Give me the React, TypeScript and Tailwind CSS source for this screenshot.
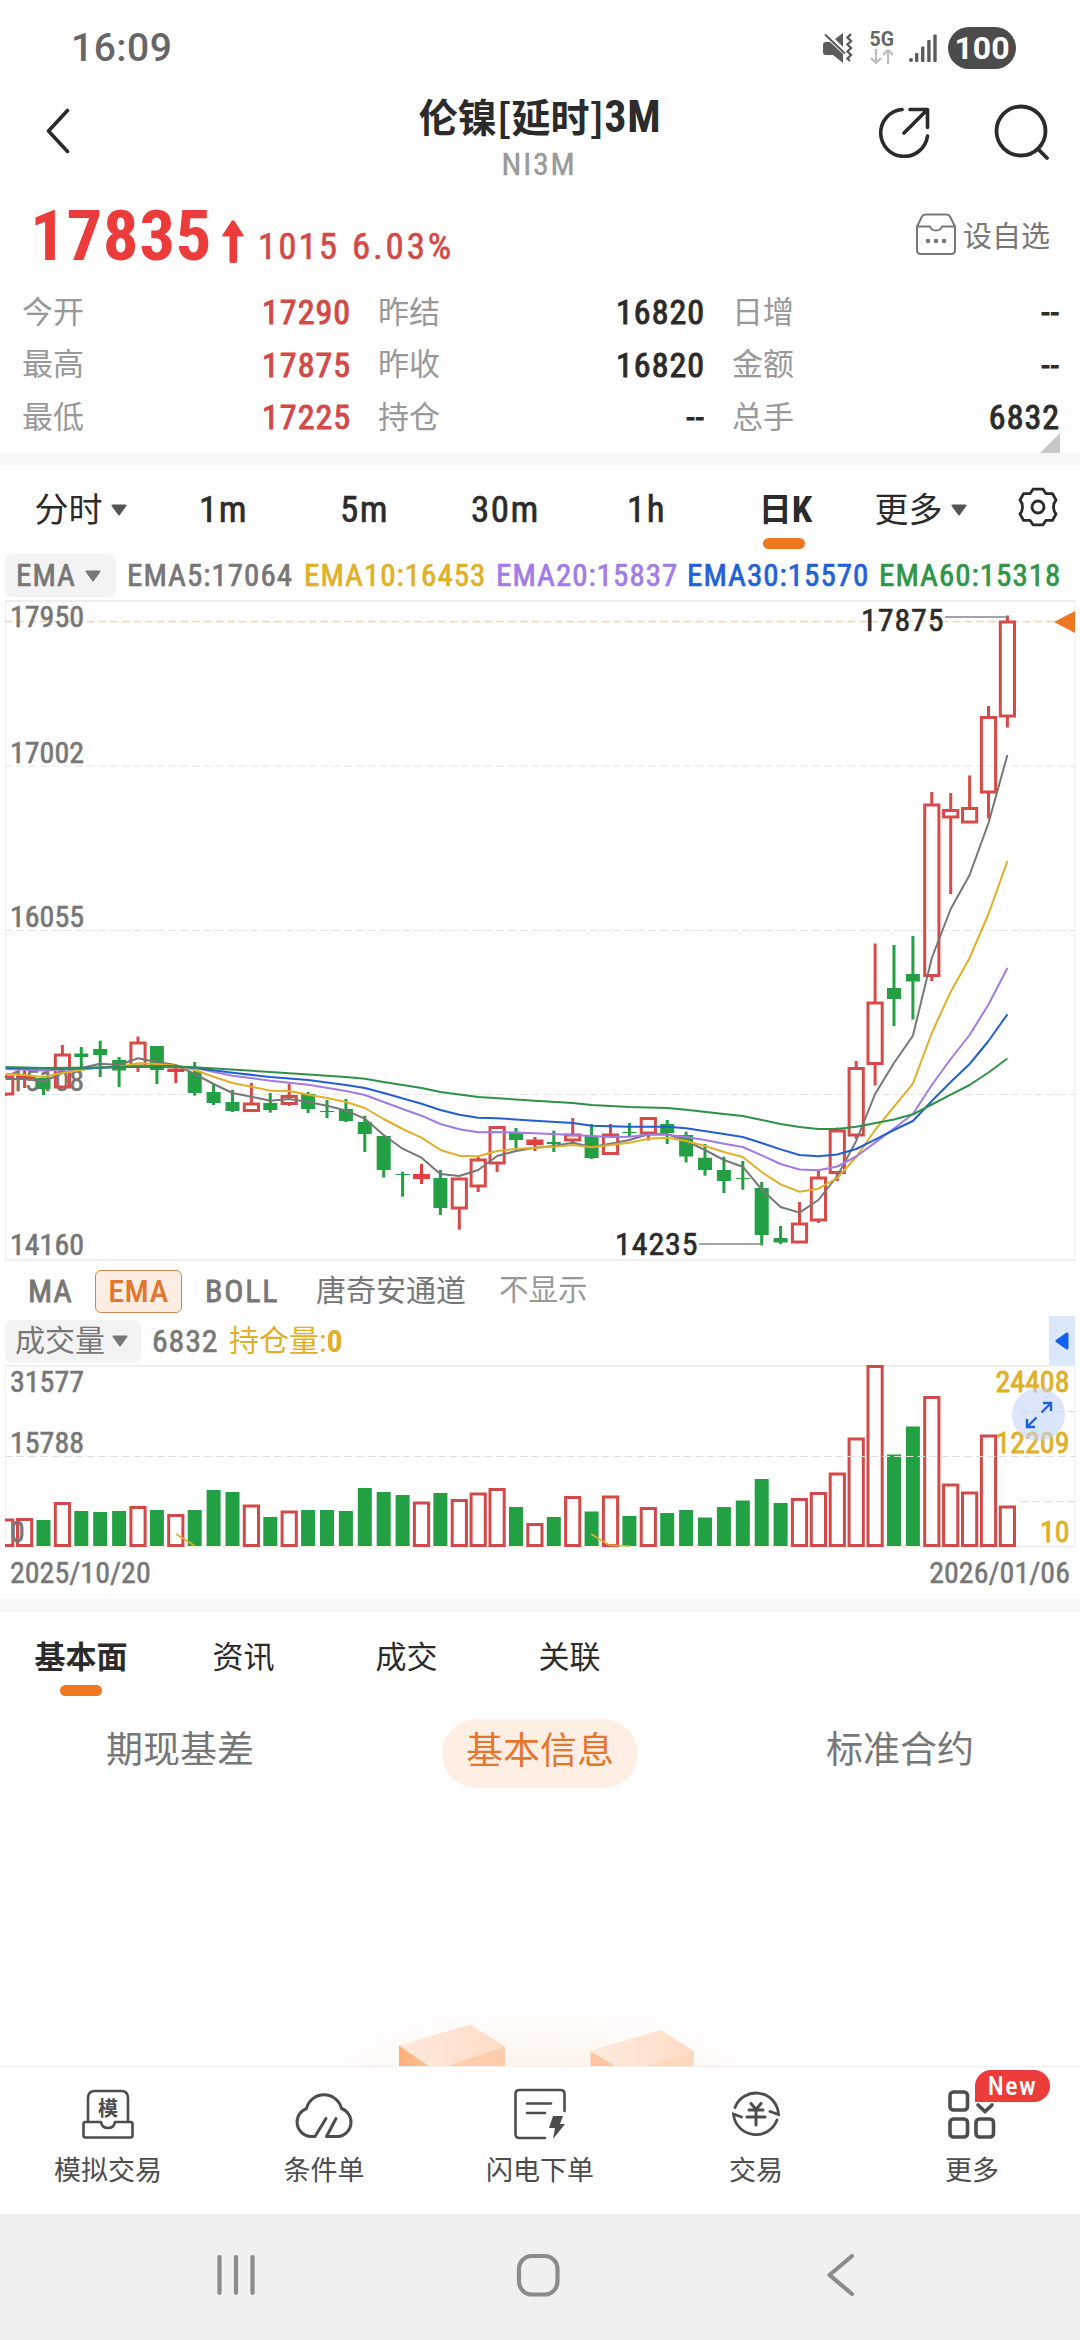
import React from "react";

type Candle = [kind: "u" | "d" | "U" | "x", high: number, top: number, bottom: number, low: number];
type Point = [index: number, y: number];

const STEP = 18.9;
const FIRST_X = 5.7;

// u: hollow up, U: thin filled up, d: down, x: flat doji
const candles: Candle[] = [
  ["u", 1075, 1077, 1094, 1096],
  ["U", 1069, 1076, 1079, 1088],
  ["d", 1076, 1078, 1089, 1095],
  ["u", 1045, 1055, 1087, 1088],
  ["d", 1047, 1053.5, 1057, 1068],
  ["d", 1040.7, 1049, 1055, 1077],
  ["d", 1057, 1060, 1070.5, 1087],
  ["u", 1036.5, 1043, 1066, 1072],
  ["d", 1046, 1046, 1070, 1084],
  ["U", 1068, 1068.5, 1072, 1083],
  ["d", 1062, 1072, 1093, 1095.7],
  ["d", 1084, 1092, 1103, 1105],
  ["d", 1090, 1102, 1111, 1112],
  ["u", 1083, 1104, 1110.5, 1112],
  ["d", 1093, 1103, 1110, 1112.7],
  ["u", 1084, 1096.5, 1103.5, 1106],
  ["d", 1092, 1094, 1109, 1113],
  ["x", 1100, 1111, 1112, 1118],
  ["d", 1099, 1109, 1121, 1122],
  ["d", 1115.7, 1122, 1134, 1152],
  ["d", 1136, 1136, 1170, 1177.5],
  ["x", 1171.7, 1174, 1175, 1196.7],
  ["U", 1164, 1174, 1179, 1184],
  ["d", 1170, 1178, 1208, 1215],
  ["u", 1177.7, 1179, 1208, 1229.7],
  ["u", 1157, 1160, 1186, 1192],
  ["u", 1126, 1127.5, 1163, 1172],
  ["d", 1128, 1132, 1140, 1148],
  ["U", 1137, 1139.5, 1145, 1151],
  ["d", 1130.7, 1142, 1144, 1152],
  ["u", 1118, 1135, 1140, 1144],
  ["d", 1124, 1135.7, 1158, 1159],
  ["u", 1124, 1135, 1153.5, 1155],
  ["x", 1123, 1132, 1133, 1137],
  ["u", 1117, 1118.5, 1133, 1140.5],
  ["d", 1120, 1124, 1133, 1144],
  ["d", 1131.7, 1135, 1156.5, 1162.5],
  ["d", 1144, 1157.7, 1170, 1175.7],
  ["d", 1156.7, 1170, 1181, 1193],
  ["x", 1161, 1178, 1179, 1189.7],
  ["d", 1182, 1188, 1235, 1245.5],
  ["d", 1226, 1238, 1242.5, 1244],
  ["u", 1202, 1224, 1242, 1243],
  ["u", 1171, 1178, 1220, 1223],
  ["u", 1127.5, 1131, 1172.5, 1181],
  ["u", 1061, 1068.5, 1135, 1139],
  ["u", 943.5, 1003, 1063.5, 1085.5],
  ["d", 945, 988, 999, 1026],
  ["d", 936, 974, 981.5, 1019.5],
  ["u", 792, 805, 975.5, 981],
  ["u", 793, 810.5, 817, 894],
  ["u", 775.5, 808.5, 822, 823],
  ["u", 706, 717.5, 792, 818.5],
  ["u", 615.5, 622, 716, 727.5],
];

const ema5: Point[] = [[0, 1079], [1, 1079], [2, 1081.5], [3, 1073], [4, 1068], [5, 1063.7], [6, 1065], [7, 1058.3], [8, 1062], [9, 1065], [10, 1074], [11, 1084], [12, 1093], [13, 1096.7], [14, 1100.7], [15, 1099], [16, 1102], [17, 1105.7], [18, 1110.5], [19, 1118.7], [20, 1135], [21, 1148.7], [22, 1157.7], [23, 1174], [24, 1176], [25, 1170], [26, 1156], [27, 1151], [28, 1147.7], [29, 1146], [30, 1142.7], [31, 1147], [32, 1143.7], [33, 1140], [34, 1134.3], [35, 1134], [36, 1141], [37, 1150], [38, 1160], [39, 1166.7], [40, 1189.5], [41, 1207], [42, 1212.6], [43, 1200], [44, 1176], [45, 1141], [46, 1094], [47, 1063], [48, 1035.7], [49, 958], [50, 909], [51, 875], [52, 823], [53, 755]];
const ema10: Point[] = [[0, 1073.7], [1, 1075], [2, 1077], [3, 1073], [4, 1070], [5, 1067.3], [6, 1067], [7, 1063.3], [8, 1064], [9, 1065.7], [10, 1070], [11, 1076.7], [12, 1083], [13, 1086.7], [14, 1090.7], [15, 1091], [16, 1094.7], [17, 1098], [18, 1102], [19, 1108], [20, 1119], [21, 1129], [22, 1137.7], [23, 1150], [24, 1155.7], [25, 1156.3], [26, 1151], [27, 1149], [28, 1147.7], [29, 1146.7], [30, 1145], [31, 1147.3], [32, 1145], [33, 1142.7], [34, 1138.7], [35, 1137.7], [36, 1141], [37, 1146], [38, 1152], [39, 1157], [40, 1172], [41, 1184.4], [42, 1191.7], [43, 1188.7], [44, 1178], [45, 1157], [46, 1130], [47, 1106.7], [48, 1083.6], [49, 1033], [50, 991.7], [51, 958], [52, 914], [53, 861]];
const ema20: Point[] = [[0, 1069], [2, 1070.5], [4, 1068.7], [6, 1067], [7, 1066], [9, 1066], [10, 1068], [12, 1075.7], [14, 1080.7], [16, 1084.7], [18, 1091], [19, 1095], [20, 1102], [21, 1109], [22, 1115.7], [23, 1124], [24, 1129.3], [25, 1132.3], [26, 1132], [28, 1133.3], [30, 1135], [32, 1137], [33, 1136.7], [34, 1134.7], [35, 1134.7], [36, 1137], [37, 1140], [38, 1143.7], [39, 1147], [40, 1155.3], [41, 1164], [42, 1169.5], [43, 1170.3], [44, 1166.5], [45, 1156.5], [46, 1142.6], [47, 1128.5], [48, 1114], [49, 1085], [50, 1059], [51, 1035], [52, 1004.5], [53, 968]];
const ema30: Point[] = [[0, 1068], [3, 1068.7], [6, 1067], [9, 1066.5], [10, 1067.7], [12, 1072.7], [14, 1077], [16, 1080], [18, 1085], [19, 1088], [20, 1093], [22, 1103.7], [23, 1110], [24, 1114.7], [25, 1117.7], [26, 1118.3], [28, 1120.7], [30, 1123], [31, 1125.7], [33, 1126.7], [35, 1126.7], [36, 1128.3], [38, 1134], [39, 1137], [40, 1143], [41, 1149.4], [42, 1155], [43, 1156.2], [44, 1154.5], [45, 1149], [46, 1139.6], [47, 1130], [48, 1121], [49, 1101], [50, 1082], [51, 1064], [52, 1041], [53, 1014.3]];
const ema60: Point[] = [[0, 1067], [2, 1068], [5, 1067.5], [8, 1066], [10, 1067.3], [14, 1072], [18, 1077], [19, 1078.7], [20, 1082], [22, 1088], [23, 1092], [25, 1097], [28, 1100.7], [30, 1103], [31, 1105], [33, 1107], [35, 1108], [36, 1109.7], [38, 1114], [39, 1116], [40, 1120], [41, 1124], [42, 1127], [43, 1129], [44, 1129], [45, 1126.8], [47, 1119.5], [48, 1114.3], [49, 1104.5], [50, 1094.7], [51, 1085], [52, 1072.5], [53, 1058.5]];

const volumes: [up: 0 | 1, top: number][] = [
  [1, 1520], [1, 1519.5], [0, 1520], [1, 1503.5], [0, 1511], [0, 1512], [0, 1511], [1, 1507.5], [0, 1510],
  [1, 1515.5], [0, 1510], [0, 1490], [0, 1492], [1, 1506], [0, 1517], [1, 1512], [0, 1510], [0, 1510],
  [0, 1511], [0, 1488], [0, 1492], [0, 1495], [1, 1503], [0, 1493], [1, 1500.5], [1, 1494], [1, 1489.5],
  [0, 1507], [1, 1524.5], [0, 1517], [1, 1497.5], [0, 1511.5], [1, 1497], [0, 1516], [1, 1508.5], [0, 1513],
  [0, 1510], [0, 1517.5], [0, 1507], [0, 1500.5], [0, 1479], [0, 1503], [1, 1499.5], [1, 1493.5], [1, 1474],
  [1, 1439], [1, 1366.5], [0, 1454.5], [0, 1426.5], [1, 1397.5], [1, 1485], [1, 1493], [1, 1436], [1, 1507],
];

const stats = [
  ["今开", "17290", true],
  ["昨结", "16820", false],
  ["日增", "--", false],
  ["最高", "17875", true],
  ["昨收", "16820", false],
  ["金额", "--", false],
  ["最低", "17225", true],
  ["持仓", "--", false],
  ["总手", "6832", false],
] as const;

const x = (i: number) => FIRST_X + i * STEP;
const toPoints = (data: Point[]) => data.map(([i, y]) => `${x(i)},${y}`).join(" ");

const Caret = ({ className = "" }: { className?: string }) => (
  <svg viewBox="0 0 16 12" className={`w-4 h-3 ${className}`}>
    <path d="M1.500 1.500h13L8 10.500z" fill="currentColor" stroke="currentColor" strokeWidth="2" strokeLinejoin="round" />
  </svg>
);

const StatusBar = () => (
  <div className="h-[84px] pt-3 pl-[71px] pr-16 flex items-center justify-between text-[#666] font-['Roboto']">
    <span className="text-[39px] font-medium tracking-[0.5px]">16:09</span>
    <div className="flex items-center">
      <svg viewBox="0 0 30 30" className="w-[30px] h-[30px] mr-[17px]" fill="#5c5c5c">
        <path d="M0 12q0-3 3-3h4l13 12v9l-10-8H3q-3 0-3-3zM12 6l8-6v14z" />
        <path d="M2 1.500l20 19" stroke="#5c5c5c" strokeWidth="2" />
        <path d="M28 1l-3.500 3.500 3.500 3.500-3.500 3.500 3.500 3.500-3.500 3.500 3.500 3.500-3.500 3.500 2.500 2.500" fill="none" stroke="#5c5c5c" strokeWidth="2.400" />
      </svg>
      <div className="flex flex-col items-center mr-[15px]">
        <span className="text-[19.5px] leading-[18px] font-bold">5G</span>
        <svg viewBox="0 0 24 16" className="w-6 h-4" fill="none" stroke="#bdbdbd" strokeWidth="2.200">
          <path d="M6 0v14M1 9l5 5 5-5M18 15V1M13 6l5-5 5 5" />
        </svg>
      </div>
      <svg viewBox="0 0 28 28" className="w-7 h-7 mr-[11px]" fill="#5c5c5c">
        <circle cx="2" cy="26" r="2" />
        <rect x="6" y="19" width="3.400" height="9" rx="1" />
        <rect x="12" y="12.500" width="3.400" height="15.500" rx="1" />
        <rect x="18.200" y="6" width="3.400" height="22" rx="1" />
        <rect x="24.300" y="0.500" width="3.400" height="27.500" rx="1" />
      </svg>
      <span className="w-[68px] h-[42px] rounded-full bg-[#4b4b4b] text-white text-[32px] leading-[43px] font-bold text-center">
        100
      </span>
    </div>
  </div>
);

const Header = () => (
  <header className="relative h-[101px] flex items-center justify-between pl-[46px] pr-[30px] text-[#2b2b2b]">
    <svg viewBox="0 0 24 46" className="w-6 h-[46px] -mt-2" fill="none" stroke="currentColor" strokeWidth="3.600" strokeLinecap="round" strokeLinejoin="round">
      <path d="M21.500 2.500L2.500 23l19 20.500" />
    </svg>
    <div className="absolute left-0 right-0 top-1.5 flex flex-col items-center">
      <h1 className="flex items-center h-[50px] text-[39px] leading-none font-bold font-['Noto_Sans_CJK_SC',sans-serif]">
        伦镍[延时]
        <span className="text-[44px] tracking-[0.8px] font-['Roboto_Condensed'] mt-1">3M</span>
      </h1>
      <span className="text-[32px] leading-[48px] text-[#999] tracking-[1.8px] mr-0.5 [-webkit-text-stroke:0.4px]">NI3M</span>
    </div>
    <div className="flex items-center -mt-1.5 gap-16">
      <svg viewBox="0 0 52 52" className="w-[52px] h-[52px]" fill="none" stroke="currentColor" strokeWidth="3.600" strokeLinecap="round" strokeLinejoin="round">
        <path d="M24 3.500A23.500 23.500 0 1 0 49.500 30M32 3.500h17.500v18M49 4L26 27" />
      </svg>
      <svg viewBox="0 0 56 56" className="w-14 h-14" fill="none" stroke="currentColor" strokeWidth="3.800" strokeLinecap="round">
        <circle cx="27" cy="27" r="24.500" />
        <path d="M44 45l9 9" />
      </svg>
    </div>
  </header>
);

const PriceRow = () => (
  <div className="h-[101px] flex items-center pl-[30px] pr-[30px]">
    <span className="text-[71px] leading-none font-bold text-[#eb3b3b] tracking-[0.5px] w-[192px]">17835</span>
    <svg viewBox="0 0 22 43" className="w-[22px] h-[43px] mt-3" fill="#eb3b3b">
      <path d="M9.500 1q1.500-1.500 3 0l9 14q.5 1.500-1 1.500H15V41q0 2-2 2H9.500q-2 0-2-2V16.500h-6Q0 16.500.5 15z" />
    </svg>
    <span className="text-[37px] leading-none text-[#d14a48] tracking-[2px] ml-[14px] mt-[22px] w-[94px] [-webkit-text-stroke:0.6px]">1015</span>
    <span className="text-[37px] leading-none text-[#d14a48] tracking-[2.8px] mt-[22px] [-webkit-text-stroke:0.6px]">6.03%</span>
    <button className="ml-auto flex items-center gap-[7px] text-[29px] leading-none text-[#777]">
      <svg viewBox="0 0 40 42" className="w-10 h-[42px] -mt-1" fill="none" stroke="currentColor" strokeWidth="2" strokeLinejoin="round">
        <path d="M1 13.500L6 3.500Q7 1.500 9.500 1.500h21Q33 1.500 34 3.500l5 10V37q0 4-4 4H5q-4 0-4-4zM1 13.500h13q1.500 4 6 4t6-4h13" />
        <g fill="currentColor" stroke="none">
          <circle cx="12" cy="28" r="2.300" />
          <circle cx="20" cy="28" r="2.300" />
          <circle cx="28" cy="28" r="2.300" />
        </g>
      </svg>
      <span className="mt-1">设自选</span>
    </button>
  </div>
);

const Stats = () => (
  <div className="relative h-[167px] pl-[22px] grid grid-cols-[329px_327px_328px] gap-x-[27px] content-start">
    {stats.map(([label, value, up]) => (
      <div key={label} className="h-[52.5px] flex items-center justify-between leading-none">
        <span className="text-[31px] text-[#999]">{label}</span>
        <span className={`text-[34px] tracking-[1px] [-webkit-text-stroke:1px] ${up ? "text-[#d14a48]" : "text-[#2b2b2b]"}`}>{value}</span>
      </div>
    ))}
    <svg viewBox="0 0 20 20" className="absolute right-5 bottom-0 w-5 h-5">
      <path d="M20 0v20H0z" fill="#c8c8c8" />
    </svg>
  </div>
);

const Periods = () => (
  <nav className="h-[84px] pl-[10px] flex items-start text-[#2b2b2b] leading-none">
    {["分时", "1m", "5m", "30m", "1h", "日K", "更多"].map((name) => {
      const active = name === "日K";
      const menu = name === "分时" || name === "更多";
      return (
        <div key={name} className={`w-[141px] h-full flex flex-col items-center ${name === "更多" ? "-ml-1.5" : ""}`}>
          <span className={`h-[73px] pt-4 flex items-center text-[37px] ${active ? "font-bold" : menu ? "" : "tracking-[1.5px] pl-1 [-webkit-text-stroke:0.6px]"}`}>
            {menu ? <span className="text-[34px]">{name}</span> : active ? <><span className="text-[33px]">日</span>K</> : name}
            {menu && <Caret className="ml-2 text-[#555]" />}
          </span>
          {active && <span className="w-[42px] h-[11px] rounded-full bg-[#ee7722] -ml-1" />}
        </div>
      );
    })}
    <svg viewBox="-20 -20 40 40" className="w-10 h-10 ml-[27px] mt-[22px]" fill="none" stroke="currentColor" strokeWidth="2.800" strokeLinejoin="round">
      <path d="M-5-17.800H5L8-13.300H14.500L18-7Q15.500-4 15.500 0Q15.500 4 18 7L14.500 13.300H8L5 17.800H-5L-8 13.300H-14.500L-18 7Q-15.500 4-15.500 0Q-15.500-4-18-7L-14.500-13.300H-8Z" />
      <circle r="6" />
    </svg>
  </nav>
);

const EmaLegend = () => (
  <div className="h-[51px] pt-0.5 pl-[5px] flex items-center text-[31px] leading-none tracking-[1px] [-webkit-text-stroke:0.7px]">
    <span className="w-[111px] h-[43px] pl-[11px] mr-[11px] flex items-center rounded-lg bg-[#f3f3f3] text-[#777]">
      EMA
      <Caret className="ml-[9px]" />
    </span>
    <span className="w-[177px] text-[#777]">EMA5:17064</span>
    <span className="w-[192px] text-[#e0b028]">EMA10:16453</span>
    <span className="w-[191px] text-[#a37be6]">EMA20:15837</span>
    <span className="w-[192px] text-[#1f62d8]">EMA30:15570</span>
    <span className="text-[#2f9548]">EMA60:15318</span>
  </div>
);

const CandleChart = () => (
  <svg viewBox="0 600 1080 662" className="block w-[1080px] h-[662px]" fontSize="30">
    <g fill="none" stroke="#efefef" strokeWidth="2">
      <path d="M5 601H1075M5 1260H1075" />
      <path d="M5.500 600V1261M1075 600V1261" strokeWidth="1" />
    </g>
    <path d="M5 766H1075M5 930.500H1075M5 1094.500H1075" stroke="#e4e4e4" strokeDasharray="7.500 4.200" />
    <path d="M5 621.500H1075" stroke="#f0d6b4" strokeWidth="1.300" strokeDasharray="7.500 4.200" />
    <g fill="#777" stroke="#777" strokeWidth="0.600">
      <text x="10" y="627">17950</text>
      <text x="10" y="763">17002</text>
      <text x="10" y="927">16055</text>
      <text x="10" y="1090.500">15108</text>
      <text x="10" y="1255">14160</text>
    </g>
    <clipPath id="plot">
      <rect x="5" y="600" width="1070" height="662" />
    </clipPath>
    <g clipPath="url(#plot)">
      {candles.map(([kind, high, top, bottom, low], i) => {
        const cx = x(i);
        if (kind === "u") {
          return (
            <g key={i} stroke="#d64a48" strokeWidth="3" fill="none">
              <path d={`M${cx} ${high}V${top}M${cx} ${bottom}V${low}`} />
              <rect x={cx - 7.1} y={top} width="14.200" height={bottom - top} />
            </g>
          );
        }
        const color = kind === "U" ? "#e04040" : "#23a044";
        const half = kind === "U" ? 8.5 : 7;
        return (
          <g key={i}>
            <path d={`M${cx} ${high}V${low}`} stroke={color} strokeWidth="3" />
            <rect x={cx - half} y={top} width={half * 2} height={bottom - top} fill={color} />
          </g>
        );
      })}
      <g fill="none" strokeWidth="2" strokeLinejoin="round">
        <polyline points={toPoints(ema5)} stroke="#777" />
        <polyline points={toPoints(ema10)} stroke="#e0b028" />
        <polyline points={toPoints(ema20)} stroke="#a37be0" />
        <polyline points={toPoints(ema30)} stroke="#235fce" />
        <polyline points={toPoints(ema60)} stroke="#2f9148" />
      </g>
    </g>
    <path d="M945 617H1007M699 1244H762" stroke="#888" strokeWidth="1.700" />
    <g fill="#2b2b2b" stroke="#2b2b2b" strokeWidth="0.600" fontSize="32" letterSpacing="0.900">
      <text x="861" y="630.500">17875</text>
      <text x="615" y="1255">14235</text>
    </g>
    <path d="M1075 611V633L1054 622z" fill="#ee7722" />
  </svg>
);

const Indicators = () => (
  <div className="h-[56px] pt-0.5 pl-7 flex items-center text-[32px] leading-none text-[#777]">
    <span className="w-[67px] tracking-[0.8px] [-webkit-text-stroke:0.8px]">MA</span>
    <span className="w-[87px] h-[43px] mr-[23px] flex items-center justify-center rounded-md border border-[#cf8652] bg-[#fdeee3] text-[#e4762f] font-medium tracking-[0.5px]">
      EMA
    </span>
    <span className="w-[111px] tracking-[1.800px] [-webkit-text-stroke:0.8px]">BOLL</span>
    <span className="w-[183px] text-[30px]">唐奇安通道</span>
    <span className="text-[29.5px] text-[#999]">不显示</span>
  </div>
);

const VolumeLegend = () => (
  <div className="h-[46px] pl-[5px] flex items-center text-[32px] leading-none text-[#777]">
    <span className="w-[136px] h-[43px] pl-2.5 mr-[11px] flex items-center rounded-lg bg-[#f3f3f3]">
      <span className="text-[30px]">成交量</span>
      <Caret className="ml-[7px]" />
    </span>
    <span className="w-[77px] tracking-[0.8px] [-webkit-text-stroke:0.6px]">6832</span>
    <span className="text-[#e0b028] flex items-center"><span className="text-[30px]">持仓量</span>:<span className="font-bold">0</span></span>
    <span className="ml-auto mr-[5px] w-[26px] h-[51px] flex items-center justify-center bg-[#dbe7fb]">
      <svg viewBox="0 0 14 18" className="w-3.5 h-[18px]">
        <path d="M12 2v14L2 9z" fill="#1261ee" stroke="#1261ee" strokeWidth="3" strokeLinejoin="round" />
      </svg>
    </span>
  </div>
);

const VolumeChart = () => (
  <div className="relative">
    <svg viewBox="0 1364 1080 186" className="block w-[1080px] h-[186px]" fontSize="30">
      <g fill="none" stroke="#efefef" strokeWidth="2">
        <path d="M5 1366H1075M5 1546.500H1075" />
        <path d="M5.500 1366V1547M1075 1366V1547" strokeWidth="1" />
      </g>
      <clipPath id="bars">
        <rect x="5" y="1364" width="1070" height="186" />
      </clipPath>
      <g clipPath="url(#bars)">
        {volumes.map(([up, top], i) =>
          up ? (
            <rect key={i} x={x(i) - 7.1} y={top} width="14.200" height={1545.5 - top} fill="none" stroke="#d14a48" strokeWidth="3" />
          ) : (
            <rect key={i} x={x(i) - 7} y={top} width="14" height={1546 - top} fill="#23a044" />
          )
        )}
      </g>
      <path d="M5 1456.500H1075M1021 1411.500H1075M1021 1501.500H1075" stroke="#dedede" strokeDasharray="7.500 4.200" />
      <path d="M176 1534L195 1546M591 1534L609 1545L630 1546" fill="none" stroke="#e0b028" strokeWidth="1.500" />
      <g fill="#777" stroke="#777" strokeWidth="0.600">
        <text x="10" y="1392">31577</text>
        <text x="10" y="1452.500">15788</text>
        <text x="10" y="1542">0</text>
      </g>
      <g fill="#e0b028" stroke="#e0b028" strokeWidth="0.800" textAnchor="end">
        <text x="1069.500" y="1392">24408</text>
        <text x="1069.500" y="1452.500">12209</text>
        <text x="1069.500" y="1542">10</text>
      </g>
    </svg>
    <button className="absolute left-[1012px] top-6 w-[53px] h-[53px] rounded-full bg-[#c4d6f8]/60 flex items-center justify-center">
      <svg viewBox="0 0 28 28" className="w-7 h-7" fill="none" stroke="#1f62d8" strokeWidth="2.400">
        <path d="M16.500 11.500L26 2M18 2h8v8M11.500 16.500L2 26M10 26H2v-8" />
      </svg>
    </button>
  </div>
);

const tools: { label: string; icon: React.ReactNode }[] = [
  {
    label: "模拟交易",
    icon: (
      <svg viewBox="0 0 52 50" className="w-[52px] h-[50px]" fill="none" stroke="currentColor" strokeWidth="2.600" strokeLinejoin="round">
        <path d="M6 33V9q0-7 7-7h26q7 0 7 7v24M19 33H3.500Q1.500 33 1.500 35V46.500Q1.500 48.500 3.500 48.500h45Q50.500 48.500 50.500 46.500V35Q50.500 33 48.500 33H33q-1 6-7 6t-7-6z" />
        <text x="26" y="27" fontSize="20" fontWeight="bold" textAnchor="middle" fill="currentColor" stroke="none">模</text>
      </svg>
    ),
  },
  {
    label: "条件单",
    icon: (
      <svg viewBox="0 0 60 50" className="w-[60px] h-[50px]" fill="none" stroke="currentColor" strokeWidth="3" strokeLinejoin="round" strokeLinecap="round">
        <path d="M32 29.500L21 47.500H16A14.500 14.500 0 0 1 12.500 19.500A18 18 0 0 1 47.500 19.500A14.500 14.500 0 0 1 44.500 47.500H32.500L42 29.500" />
      </svg>
    ),
  },
  {
    label: "闪电下单",
    icon: (
      <svg viewBox="0 0 52 52" className="w-[52px] h-[52px]" fill="none" stroke="currentColor" strokeWidth="2.600" strokeLinecap="round">
        <path d="M50.500 23V6q0-4-4-4h-41q-4 0-4 4v40q0 4 4 4H31M13 15.500H37M13 25H31" />
        <path d="M39 28h10l-3 8h5L39 51l2-11h-6z" fill="currentColor" stroke="none" />
      </svg>
    ),
  },
  {
    label: "交易",
    icon: (
      <svg viewBox="0 0 50 50" className="w-[50px] h-[50px]" fill="none" stroke="currentColor" strokeWidth="2.800" strokeLinecap="round">
        <path d="M4 18.500A22.500 22.500 0 0 1 47.500 25.500L39 22.500M46 31A22.500 22.500 0 0 1 2.500 25L10.500 28" />
        <path d="M20 14.500l5 6 5-6M18 21h14M16 28h18M25 21v15" strokeWidth="3" />
      </svg>
    ),
  },
  {
    label: "更多",
    icon: (
      <svg viewBox="0 0 50 50" className="w-[50px] h-[50px]" fill="none" stroke="currentColor" strokeWidth="3.600" strokeLinecap="round">
        <rect x="3" y="3" width="17.500" height="18" rx="3.500" />
        <rect x="3" y="30" width="17.500" height="18" rx="3.500" />
        <rect x="29" y="30" width="17.500" height="18" rx="3.500" />
        <path d="M31 16l7 6.500 7-6.500" />
      </svg>
    ),
  },
];

const BottomBar = () => (
  <nav className="h-[148px] border-t border-[#efefef] grid grid-cols-5 text-[#4d4d4d]">
    {tools.map(({ label, icon }) => (
      <div key={label} className="relative flex flex-col items-center">
        <span className="h-[72px] mt-[11px] flex items-center">{icon}</span>
        <span className="text-[27px] leading-[42px]">{label}</span>
        {label === "更多" && (
          <span className="absolute left-[111px] top-[3px] w-[75px] h-8 rounded-full rounded-bl-none bg-[#eb3b3b] text-white text-[26px] leading-8 font-medium tracking-[1.5px] text-center">
            New
          </span>
        )}
      </div>
    ))}
  </nav>
);

export default function App() {
  return (
    <div className="w-[1080px] h-[2340px] overflow-hidden flex flex-col bg-[#fefefe] whitespace-nowrap font-['Roboto_Condensed','Noto_Sans_CJK_SC',sans-serif]">
      <StatusBar />
      <Header />
      <PriceRow />
      <Stats />
      <div className="h-3 bg-[#f7f7f7]" />
      <Periods />
      <EmaLegend />
      <CandleChart />
      <Indicators />
      <VolumeLegend />
      <VolumeChart />
      <div className="h-[49px] px-2.5 pb-[3px] flex items-center justify-between text-[30px] leading-none text-[#777] [-webkit-text-stroke:0.5px]">
        <span>2025/10/20</span>
        <span>2026/01/06</span>
      </div>
      <div className="h-[13px] bg-[#f7f7f7]" />
      <nav className="h-[97px] pt-[30px] flex items-start text-[31px] leading-8 text-[#2b2b2b]">
        <div className="w-[162px] flex flex-col items-center gap-[11px]">
          <span className="font-bold">基本面</span>
          <span className="w-[42px] h-[11px] rounded-full bg-[#ee7722]" />
        </div>
        <span className="w-[163px] text-center">资讯</span>
        <span className="w-[163px] text-center">成交</span>
        <span className="w-[163px] text-center">关联</span>
      </nav>
      <div className="h-[90px] grid grid-cols-3 justify-items-center items-center text-[37px] leading-none text-[#777]">
        <span className="-mt-2">期现基差</span>
        <span className="w-[196px] h-[69px] pt-3.5 -mt-0.5 rounded-full bg-[#feefe4] text-[#e4762f] text-center">基本信息</span>
        <span className="-mt-2">标准合约</span>
      </div>
      <div className="flex-1 flex items-end">
        <svg viewBox="0 1966 1080 100" className="w-[1080px] h-[100px]">
          <defs>
            <radialGradient id="glow">
              <stop offset="0" stopColor="#fdeee2" />
              <stop offset="1" stopColor="#fdeee2" stopOpacity="0" />
            </radialGradient>
            <linearGradient id="side">
              <stop offset="0" stopColor="#fdb07a" />
              <stop offset="1" stopColor="#fdc49c" />
            </linearGradient>
            <linearGradient id="lid">
              <stop offset="0" stopColor="#feeadd" />
              <stop offset="1" stopColor="#fedcc6" />
            </linearGradient>
          </defs>
          <ellipse cx="540" cy="2096" rx="250" ry="90" fill="url(#glow)" />
          <path d="M399 2045.500L438 2072V2090H399z" fill="url(#side)" />
          <path d="M505 2046.500L438 2068V2090H505z" fill="#fdccab" />
          <path d="M399 2045.500L470 2024.500L505 2046.500L437 2070z" fill="url(#lid)" />
          <path d="M590.500 2051L628 2074V2090H590.500z" fill="#fdc6a0" />
          <path d="M694 2051L628 2071V2090H694z" fill="#fdd8bf" />
          <path d="M590.500 2051L660.500 2030L694 2051L628 2073z" fill="url(#lid)" />
        </svg>
      </div>
      <BottomBar />
      <div className="h-[126px] bg-[#f0f0f3] text-[#8b8b8b]">
        <svg viewBox="0 0 1080 126" className="w-[1080px] h-[126px]" fill="none" stroke="currentColor" strokeWidth="4.200" strokeLinecap="round" strokeLinejoin="round">
          <path d="M219.500 43V79M236 43V79M252.500 43V79" />
          <rect x="519" y="42" width="38.500" height="38.500" rx="13" />
          <path d="M852 42L829.500 61 852 80" />
        </svg>
      </div>
    </div>
  );
}
